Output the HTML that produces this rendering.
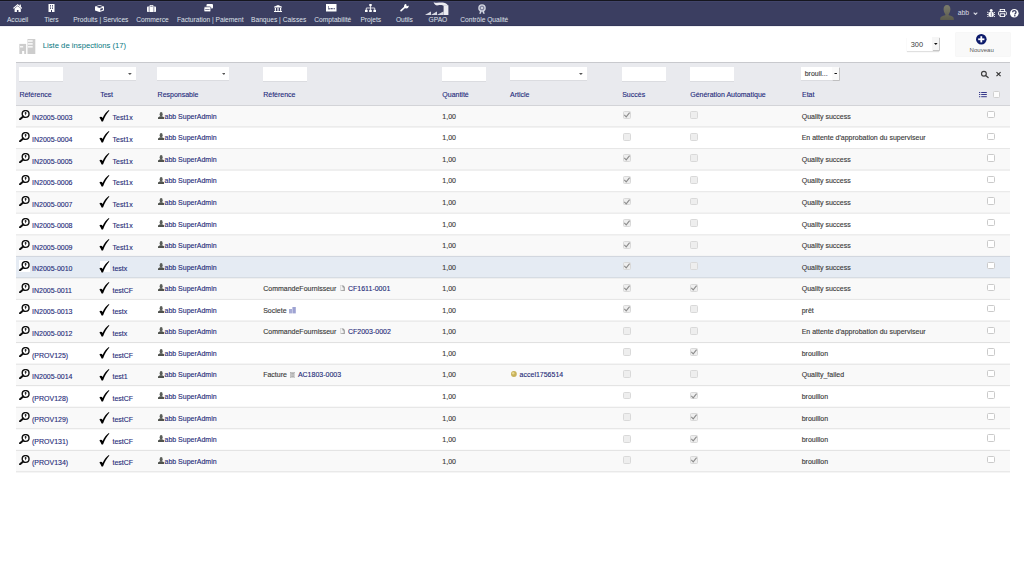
<!DOCTYPE html>
<html><head><meta charset="utf-8"><title>Liste de inspections</title>
<style>
html,body{margin:0;padding:0;width:1024px;height:576px;overflow:hidden;background:#fff;position:relative;font-family:"Liberation Sans",sans-serif}
.b{position:absolute;display:block}
.t{position:absolute;white-space:nowrap;line-height:0;height:0;-webkit-text-stroke:0.12px currentColor}
.c{text-align:center}
</style></head><body>
<div class="b" style="left:0.00px;top:0.00px;width:1024.00px;height:26.00px;background:#3b3e61"></div>
<div class="b" style="left:0.00px;top:0.00px;width:1024.00px;height:1.00px;background:#15161f"></div>
<div class="b" style="left:0.00px;top:1.00px;width:1024.00px;height:1.00px;background:#41446a"></div>
<div class="b" style="left:0.00px;top:25.00px;width:1024.00px;height:1.00px;background:#34375a"></div>
<div class="b" style="left:0.00px;top:26.00px;width:1024.00px;height:1.00px;background:#eeeff3"></div>
<div class="t c" style="left:-82.40px;width:200px;top:20.00px;font-size:6.65px;color:#dfe1e9;-webkit-text-stroke:0">Accueil</div>
<svg class="b" style="left:12.70px;top:4.00px" width="9.4" height="8" viewBox="0 0 9.4 8"><path d="M4.7 0 L9.4 4.1 L8.6 4.8 L4.7 1.5 L0.8 4.8 L0 4.1 Z" fill="#fff"/><rect x="6.6" y="0.6" width="1.3" height="2.4" fill="#fff"/><path d="M1.6 4.6 L4.7 2.1 L7.8 4.6 V8 H5.5 V5.9 H3.9 V8 H1.6 Z" fill="#fff"/></svg>
<div class="t c" style="left:-48.60px;width:200px;top:20.00px;font-size:6.65px;color:#dfe1e9;-webkit-text-stroke:0">Tiers</div>
<svg class="b" style="left:47.80px;top:4.00px" width="7" height="8" viewBox="0 0 7 8"><rect x="0.5" y="0" width="6" height="8" fill="#fff"/><rect x="2" y="1.2" width="1" height="1.3" fill="#3b3e61"/><rect x="4" y="1.2" width="1" height="1.3" fill="#3b3e61"/><rect x="2" y="3.5" width="1" height="1.3" fill="#3b3e61"/><rect x="4" y="3.5" width="1" height="1.3" fill="#3b3e61"/><rect x="3" y="6" width="1" height="2" fill="#3b3e61"/></svg>
<div class="t c" style="left:0.80px;width:200px;top:20.00px;font-size:6.65px;color:#dfe1e9;-webkit-text-stroke:0">Produits | Services</div>
<svg class="b" style="left:95.30px;top:4.80px" width="9" height="7" viewBox="0 0 9 7"><path d="M4.5 0 L9 1.6 V5.4 L4.5 7 L0 5.4 V1.6 Z" fill="#fff"/><path d="M1.2 1.8 L4.5 3 L7.8 1.8 L4.5 0.8Z" fill="#3b3e61"/><path d="M5.3 3.8 L7.8 3 V4.8 L5.3 5.7Z" fill="#3b3e61"/></svg>
<div class="t c" style="left:52.45px;width:200px;top:20.00px;font-size:6.65px;color:#dfe1e9;-webkit-text-stroke:0">Commerce</div>
<svg class="b" style="left:146.80px;top:4.80px" width="9" height="7" viewBox="0 0 9 7"><rect x="0" y="1.6" width="9" height="5.4" rx="0.8" fill="#fff"/><path d="M3 1.8 V0.4 H6 V1.8" stroke="#fff" stroke-width="0.9" fill="none"/><rect x="1.8" y="1.6" width="0.6" height="5.4" fill="#3b3e61"/><rect x="6.6" y="1.6" width="0.6" height="5.4" fill="#3b3e61"/></svg>
<div class="t c" style="left:110.25px;width:200px;top:20.00px;font-size:6.65px;color:#dfe1e9;-webkit-text-stroke:0">Facturation | Paiement</div>
<svg class="b" style="left:204.25px;top:4.00px" width="9" height="8" viewBox="0 0 9 8"><rect x="2.5" y="0" width="6.5" height="4.6" rx="1" fill="#fff"/><rect x="0" y="2.8" width="6.8" height="5" rx="1" fill="#fff" stroke="#3b3e61" stroke-width="0.7"/><rect x="1.2" y="5" width="4.4" height="0.6" fill="#3b3e61"/></svg>
<div class="t c" style="left:178.65px;width:200px;top:20.00px;font-size:6.65px;color:#dfe1e9;-webkit-text-stroke:0">Banques | Caisses</div>
<svg class="b" style="left:273.70px;top:4.50px" width="8" height="7" viewBox="0 0 8 7"><path d="M4 0 L8 1.8 V2.4 H0 V1.8 Z" fill="#fff"/><rect x="0.8" y="2.8" width="1.2" height="3" fill="#fff"/><rect x="3.4" y="2.8" width="1.2" height="3" fill="#fff"/><rect x="6" y="2.8" width="1.2" height="3" fill="#fff"/><rect x="0" y="6" width="8" height="1" fill="#fff"/></svg>
<div class="t c" style="left:232.80px;width:200px;top:20.00px;font-size:6.65px;color:#dfe1e9;-webkit-text-stroke:0">Comptabilité</div>
<svg class="b" style="left:326.20px;top:4.10px" width="10.5" height="7.5" viewBox="0 0 10.5 7.5"><rect x="0" y="0" width="10.5" height="7.5" fill="#fff"/><rect x="2.0" y="2.0" width="0.9" height="3.4" fill="#8a8ca0"/><rect x="2.6" y="4.2" width="1.2" height="1.2" fill="#3b3e61"/><rect x="4.5" y="4.0" width="2.2" height="1.3" fill="#55587a"/><rect x="7.6" y="4.0" width="1.2" height="1.3" fill="#55587a"/></svg>
<div class="t c" style="left:270.75px;width:200px;top:20.00px;font-size:6.65px;color:#dfe1e9;-webkit-text-stroke:0">Projets</div>
<svg class="b" style="left:365.00px;top:3.80px" width="11" height="8.2" viewBox="0 0 11 8.2"><rect x="4.3" y="0" width="2.4" height="2.2" fill="#fff"/><path d="M5.5 2 V4 M1.3 6 V4 H9.7 V6 M5.5 4 V6" stroke="#fff" stroke-width="0.8" fill="none"/><rect x="0" y="5.8" width="2.6" height="2.4" fill="#fff"/><rect x="4.2" y="5.8" width="2.6" height="2.4" fill="#fff"/><rect x="8.4" y="5.8" width="2.6" height="2.4" fill="#fff"/></svg>
<div class="t c" style="left:304.40px;width:200px;top:20.00px;font-size:6.65px;color:#dfe1e9;-webkit-text-stroke:0">Outils</div>
<svg class="b" style="left:399.90px;top:4.30px" width="9" height="7.5" viewBox="0 0 9 7.5"><path d="M1.1 6.6 L5.0 3.0" stroke="#fff" stroke-width="1.7" stroke-linecap="round"/><circle cx="6.3" cy="2.2" r="2.3" fill="#fff"/><path d="M6.0 0.3 L6.8 2.3 L8.9 1.6 L8.9 -0.5 Z" fill="#3b3e61"/></svg>
<div class="t c" style="left:337.95px;width:200px;top:20.00px;font-size:6.65px;color:#dfe1e9;-webkit-text-stroke:0">GPAO</div>
<svg class="b" style="left:424.75px;top:1.60px" width="24.5" height="13" viewBox="0 0 24.5 13"><path d="M8.6 0.2 C12 1.4 15.5 -0.1 19 0.7 C21.3 1.3 22.6 2.5 23.4 3.8 L18.6 3.8 C17.6 3.0 15.2 2.9 13.2 3.3 C11.0 3.7 9.2 2.6 8.6 0.2 Z" fill="#ececf2"/><rect x="18.6" y="3.4" width="4.8" height="9.6" fill="#ececf2"/><path d="M0 13 C2 12 4 10.4 6 9.6 V13 Z M6 13 C8 12 10 10.4 12 9.6 V13 Z M12 13 C14 12 16.4 10.4 18.6 9.6 V13 Z" fill="#d6d8e2"/></svg>
<div class="t c" style="left:384.25px;width:200px;top:20.00px;font-size:6.65px;color:#dfe1e9;-webkit-text-stroke:0">Contrôle Qualité</div>
<svg class="b" style="left:477.70px;top:3.60px" width="8" height="10.5" viewBox="0 0 8 10.5"><path d="M2.0 6.2 L1.4 10.2 L3.0 9.4 L3.6 7.2Z M6.0 6.2 L6.6 10.2 L5.0 9.4 L4.4 7.2Z" fill="#d4d7e2"/><circle cx="4" cy="4.0" r="3.8" fill="#cfd2de"/><circle cx="4" cy="4.0" r="1.9" fill="none" stroke="#50547a" stroke-width="0.8"/></svg>
<svg class="b" style="left:940.00px;top:4.80px" width="14" height="15.4" viewBox="0 0 14 15.4"><defs><linearGradient id="av" x1="0" y1="0" x2="0" y2="1"><stop offset="0" stop-color="#7c7c6c"/><stop offset="1" stop-color="#5a5a4c"/></linearGradient></defs><path d="M7 0 C9.4 0 10.6 2 10.4 4.6 C10.2 7 9.2 8.6 8.6 9.4 L8.8 10.2 C11.6 10.8 13.8 11.6 13.8 13.6 V15.4 H0.2 V13.6 C0.2 11.6 2.4 10.8 5.2 10.2 L5.4 9.4 C4.8 8.6 3.8 7 3.6 4.6 C3.4 2 4.6 0 7 0 Z" fill="url(#av)"/></svg>
<div class="t" style="left:957.70px;top:13.24px;font-size:6.8px;color:#d9dbe3;-webkit-text-stroke:0">abb</div>
<svg class="b" style="left:972.60px;top:11.60px" width="5" height="3.4" viewBox="0 0 5 3.4"><path d="M0.7 0.7 L2.5 2.5 L4.3 0.7" stroke="#d9dbe3" stroke-width="1.1" fill="none"/></svg>
<svg class="b" style="left:986.50px;top:9.20px" width="8.4" height="8" viewBox="0 0 8.4 8"><circle cx="4.2" cy="1.6" r="1.5" fill="#fff"/><rect x="1.8" y="3" width="4.8" height="5" rx="1.5" fill="#fff"/><path d="M0 3 L1.8 4 M8.4 3 L6.6 4 M0 5.5 H1.8 M8.4 5.5 H6.6 M0 8 L1.8 7 M8.4 8 L6.6 7" stroke="#fff" stroke-width="0.8"/><rect x="3.9" y="3.4" width="0.6" height="4.2" fill="#3b3e61"/></svg>
<svg class="b" style="left:998.20px;top:9.20px" width="8.8" height="8" viewBox="0 0 8.8 8"><rect x="2.2" y="0.4" width="4.4" height="2.2" fill="none" stroke="#fff" stroke-width="0.9"/><rect x="0.45" y="2.6" width="7.9" height="3.6" rx="0.9" fill="none" stroke="#fff" stroke-width="0.9"/><rect x="2.2" y="4.8" width="4.4" height="2.8" fill="#3b3e61" stroke="#fff" stroke-width="0.9"/></svg>
<svg class="b" style="left:1010.00px;top:9.20px" width="8.6" height="8.6" viewBox="0 0 8.6 8.6"><circle cx="4.3" cy="4.3" r="4.3" fill="#fff"/><path d="M2.6 3.3 C2.6 1.2 6.0 1.2 6.0 3.2 C6.0 4.4 4.8 4.4 4.8 5.4" stroke="#3b3e61" stroke-width="1.3" fill="none"/><rect x="4.1" y="6.1" width="1.4" height="1.3" fill="#3b3e61"/></svg>
<svg class="b" style="left:18.60px;top:38.90px" width="17" height="15.3" viewBox="0 0 17 15.3"><rect x="0.35" y="4.9" width="6.75" height="10.25" fill="#cdcdcd"/><rect x="1.0" y="7.2" width="3.2" height="1.2" fill="#fff"/><rect x="3.1" y="12" width="2.1" height="3.3" fill="#fff"/><rect x="8.5" y="0" width="7.8" height="15.15" fill="#cdcdcd"/><rect x="8.9" y="1.3" width="4.8" height="1.4" fill="#fff"/><rect x="8.9" y="4.2" width="4.8" height="1.4" fill="#fff"/><rect x="8.9" y="7.2" width="4.8" height="1.3" fill="#fff"/></svg>
<div class="t" style="left:42.75px;top:45.73px;font-size:7.7px;color:#067880;-webkit-text-stroke:0">Liste de inspections (17)</div>
<div class="b" style="left:907.30px;top:36.90px;width:32.10px;height:13.80px;background:#fff;box-shadow:0 1px 1px rgba(0,0,0,0.12)"></div>
<div class="t" style="left:910.70px;top:44.84px;font-size:7.4px;color:#3a3a3a;-webkit-text-stroke:0">300</div>
<div class="b" style="left:932.20px;top:37.00px;width:7.00px;height:13.40px;background:#f6f6f6;box-shadow:0.8px 0.8px 0 #b8b8b8"></div>
<svg class="b" style="left:934.00px;top:42.80px" width="3.6" height="1.9" viewBox="0 0 3.6 1.9"><path d="M0 0 H3.6 L1.8 1.9Z" fill="#111"/></svg>
<div class="b" style="left:955.70px;top:32.70px;width:54.00px;height:23.00px;background:#f9f9f9;box-shadow:0 0 0 0.5px #f0f0f0"></div>
<svg class="b" style="left:976.40px;top:34.20px" width="10.6" height="10.6" viewBox="0 0 10.6 10.6"><circle cx="5.3" cy="5.3" r="5.3" fill="#0c1a6b"/><rect x="4.4" y="2.2" width="1.8" height="6.2" fill="#fff"/><rect x="2.2" y="4.4" width="6.2" height="1.8" fill="#fff"/></svg>
<div class="t c" style="left:881.70px;width:200px;top:49.80px;font-size:6.05px;color:#5a5a5a;-webkit-text-stroke:0">Nouveau</div>
<div class="b" style="left:16.00px;top:62.00px;width:993.60px;height:43.00px;background:#e9eaee"></div>
<div class="b" style="left:16.00px;top:62.00px;width:993.60px;height:1.00px;background:#c8c9cd"></div>
<div class="b" style="left:16.00px;top:105.00px;width:993.60px;height:1.00px;background:#d3d4d8"></div>
<div class="b" style="left:18.90px;top:66.60px;width:43.80px;height:14.40px;background:#fff;box-shadow:0 1px 0.5px rgba(0,0,0,0.06)"></div>
<div class="b" style="left:99.80px;top:66.90px;width:36.00px;height:13.20px;background:#fff;box-shadow:0 1px 0.5px rgba(0,0,0,0.06)"></div>
<svg class="b" style="left:127.90px;top:73.00px" width="3.8" height="2" viewBox="0 0 3.8 2"><path d="M0 0 H3.8 L1.9 2Z" fill="#555"/></svg>
<div class="b" style="left:157.20px;top:66.90px;width:71.90px;height:13.20px;background:#fff;box-shadow:0 1px 0.5px rgba(0,0,0,0.06)"></div>
<svg class="b" style="left:221.60px;top:73.00px" width="3.8" height="2" viewBox="0 0 3.8 2"><path d="M0 0 H3.8 L1.9 2Z" fill="#555"/></svg>
<div class="b" style="left:263.00px;top:66.60px;width:43.80px;height:14.40px;background:#fff;box-shadow:0 1px 0.5px rgba(0,0,0,0.06)"></div>
<div class="b" style="left:441.90px;top:66.60px;width:43.90px;height:14.40px;background:#fff;box-shadow:0 1px 0.5px rgba(0,0,0,0.06)"></div>
<div class="b" style="left:510.00px;top:66.90px;width:76.90px;height:13.20px;background:#fff;box-shadow:0 1px 0.5px rgba(0,0,0,0.06)"></div>
<svg class="b" style="left:579.30px;top:73.00px" width="3.8" height="2" viewBox="0 0 3.8 2"><path d="M0 0 H3.8 L1.9 2Z" fill="#555"/></svg>
<div class="b" style="left:621.80px;top:66.60px;width:43.80px;height:14.40px;background:#fff;box-shadow:0 1px 0.5px rgba(0,0,0,0.06)"></div>
<div class="b" style="left:689.80px;top:66.60px;width:43.90px;height:14.40px;background:#fff;box-shadow:0 1px 0.5px rgba(0,0,0,0.06)"></div>
<div class="b" style="left:801.00px;top:66.90px;width:38.00px;height:13.40px;background:#fff;box-shadow:0 1px 0.5px rgba(0,0,0,0.06)"></div>
<div class="t" style="left:804.70px;top:73.87px;font-size:7.0px;color:#3c3c3c;">brouil...</div>
<div class="b" style="left:832.00px;top:66.90px;width:7.00px;height:13.40px;background:#fafafa;box-shadow:0.8px 0.8px 0 #b8b8b8"></div>
<svg class="b" style="left:833.80px;top:72.60px" width="3.6" height="1.9" viewBox="0 0 3.6 1.9"><path d="M0 0 H3.6 L1.8 1.9Z" fill="#111"/></svg>
<svg class="b" style="left:979.50px;top:69.50px" width="9" height="9" viewBox="0 0 9 9"><circle cx="3.9" cy="3.7" r="2.4" stroke="#3e3e3e" stroke-width="1.15" fill="none"/><path d="M5.6 5.5 L8.1 7.6" stroke="#3e3e3e" stroke-width="1.3" stroke-linecap="round"/></svg>
<svg class="b" style="left:995.00px;top:71.00px" width="8" height="7" viewBox="0 0 8 7"><path d="M1.5 1.2 L5.6 5.2 M5.6 1.2 L1.5 5.2" stroke="#333" stroke-width="1.15" stroke-linecap="butt"/></svg>
<div class="t" style="left:19.40px;top:95.17px;font-size:7.0px;color:#1e2a7c;">Référence</div>
<div class="t" style="left:100.20px;top:95.17px;font-size:7.0px;color:#1e2a7c;">Test</div>
<div class="t" style="left:157.60px;top:95.17px;font-size:7.0px;color:#1e2a7c;">Responsable</div>
<div class="t" style="left:263.20px;top:95.17px;font-size:7.0px;color:#1e2a7c;">Référence</div>
<div class="t" style="left:442.30px;top:95.17px;font-size:7.0px;color:#1e2a7c;">Quantité</div>
<div class="t" style="left:510.00px;top:95.17px;font-size:7.0px;color:#1e2a7c;">Article</div>
<div class="t" style="left:622.20px;top:95.17px;font-size:7.0px;color:#1e2a7c;">Succès</div>
<div class="t" style="left:690.20px;top:95.17px;font-size:7.0px;color:#1e2a7c;">Génération Automatique</div>
<div class="t" style="left:802.00px;top:95.17px;font-size:7.0px;color:#1e2a7c;">Etat</div>
<svg class="b" style="left:979.00px;top:92.00px" width="8" height="6" viewBox="0 0 8 6"><g fill="#35378a"><rect x="0" y="0" width="1.3" height="1"/><rect x="2.2" y="0" width="5.6" height="1"/><rect x="0" y="2" width="1.3" height="1"/><rect x="2.2" y="2" width="5.6" height="1"/><rect x="0" y="4.2" width="1.3" height="1"/><rect x="2.2" y="4.2" width="5.6" height="1"/></g></svg>
<div class="b" style="left:993.10px;top:91.30px;width:7.20px;height:7.20px;background:#fcfcfc;border:1px solid #d0d0d0;box-sizing:border-box;border-radius:1.5px"></div>
<div class="b" style="left:16.00px;top:106.00px;width:993.60px;height:21.00px;background:#f9f9f9"></div>
<div class="b" style="left:16.00px;top:127.00px;width:993.60px;height:22.00px;background:#ffffff"></div>
<div class="b" style="left:16.00px;top:149.00px;width:993.60px;height:21.00px;background:#f9f9f9"></div>
<div class="b" style="left:16.00px;top:170.00px;width:993.60px;height:22.00px;background:#ffffff"></div>
<div class="b" style="left:16.00px;top:192.00px;width:993.60px;height:21.00px;background:#f9f9f9"></div>
<div class="b" style="left:16.00px;top:213.00px;width:993.60px;height:22.00px;background:#ffffff"></div>
<div class="b" style="left:16.00px;top:235.00px;width:993.60px;height:21.00px;background:#f9f9f9"></div>
<div class="b" style="left:16.00px;top:256.00px;width:993.60px;height:22.00px;background:#e5ebf3"></div>
<div class="b" style="left:16.00px;top:278.00px;width:993.60px;height:21.00px;background:#f9f9f9"></div>
<div class="b" style="left:16.00px;top:299.00px;width:993.60px;height:22.00px;background:#ffffff"></div>
<div class="b" style="left:16.00px;top:321.00px;width:993.60px;height:22.00px;background:#f9f9f9"></div>
<div class="b" style="left:16.00px;top:343.00px;width:993.60px;height:21.00px;background:#ffffff"></div>
<div class="b" style="left:16.00px;top:364.00px;width:993.60px;height:22.00px;background:#f9f9f9"></div>
<div class="b" style="left:16.00px;top:386.00px;width:993.60px;height:21.00px;background:#ffffff"></div>
<div class="b" style="left:16.00px;top:407.00px;width:993.60px;height:22.00px;background:#f9f9f9"></div>
<div class="b" style="left:16.00px;top:429.00px;width:993.60px;height:21.00px;background:#ffffff"></div>
<div class="b" style="left:16.00px;top:450.00px;width:993.60px;height:22.00px;background:#f9f9f9"></div>
<div class="b" style="left:16.00px;top:126.00px;width:993.60px;height:1.00px;background:rgba(0,0,0,0.050)"></div>
<div class="b" style="left:16.00px;top:127.00px;width:993.60px;height:1.00px;background:rgba(0,0,0,0.050)"></div>
<div class="b" style="left:16.00px;top:148.00px;width:993.60px;height:1.00px;background:rgba(0,0,0,0.095)"></div>
<div class="b" style="left:16.00px;top:149.00px;width:993.60px;height:1.00px;background:rgba(0,0,0,0.005)"></div>
<div class="b" style="left:16.00px;top:169.00px;width:993.60px;height:1.00px;background:rgba(0,0,0,0.039)"></div>
<div class="b" style="left:16.00px;top:170.00px;width:993.60px;height:1.00px;background:rgba(0,0,0,0.061)"></div>
<div class="b" style="left:16.00px;top:191.00px;width:993.60px;height:1.00px;background:rgba(0,0,0,0.084)"></div>
<div class="b" style="left:16.00px;top:192.00px;width:993.60px;height:1.00px;background:rgba(0,0,0,0.016)"></div>
<div class="b" style="left:16.00px;top:212.00px;width:993.60px;height:1.00px;background:rgba(0,0,0,0.028)"></div>
<div class="b" style="left:16.00px;top:213.00px;width:993.60px;height:1.00px;background:rgba(0,0,0,0.072)"></div>
<div class="b" style="left:16.00px;top:234.00px;width:993.60px;height:1.00px;background:rgba(0,0,0,0.072)"></div>
<div class="b" style="left:16.00px;top:235.00px;width:993.60px;height:1.00px;background:rgba(0,0,0,0.028)"></div>
<div class="b" style="left:16.00px;top:255.00px;width:993.60px;height:1.00px;background:rgba(0,0,0,0.017)"></div>
<div class="b" style="left:16.00px;top:256.00px;width:993.60px;height:1.00px;background:rgba(0,0,0,0.083)"></div>
<div class="b" style="left:16.00px;top:277.00px;width:993.60px;height:1.00px;background:rgba(0,0,0,0.061)"></div>
<div class="b" style="left:16.00px;top:278.00px;width:993.60px;height:1.00px;background:rgba(0,0,0,0.039)"></div>
<div class="b" style="left:16.00px;top:298.00px;width:993.60px;height:1.00px;background:rgba(0,0,0,0.006)"></div>
<div class="b" style="left:16.00px;top:299.00px;width:993.60px;height:1.00px;background:rgba(0,0,0,0.094)"></div>
<div class="b" style="left:16.00px;top:320.00px;width:993.60px;height:1.00px;background:rgba(0,0,0,0.050)"></div>
<div class="b" style="left:16.00px;top:321.00px;width:993.60px;height:1.00px;background:rgba(0,0,0,0.050)"></div>
<div class="b" style="left:16.00px;top:342.00px;width:993.60px;height:1.00px;background:rgba(0,0,0,0.094)"></div>
<div class="b" style="left:16.00px;top:343.00px;width:993.60px;height:1.00px;background:rgba(0,0,0,0.006)"></div>
<div class="b" style="left:16.00px;top:363.00px;width:993.60px;height:1.00px;background:rgba(0,0,0,0.039)"></div>
<div class="b" style="left:16.00px;top:364.00px;width:993.60px;height:1.00px;background:rgba(0,0,0,0.061)"></div>
<div class="b" style="left:16.00px;top:385.00px;width:993.60px;height:1.00px;background:rgba(0,0,0,0.083)"></div>
<div class="b" style="left:16.00px;top:386.00px;width:993.60px;height:1.00px;background:rgba(0,0,0,0.017)"></div>
<div class="b" style="left:16.00px;top:406.00px;width:993.60px;height:1.00px;background:rgba(0,0,0,0.028)"></div>
<div class="b" style="left:16.00px;top:407.00px;width:993.60px;height:1.00px;background:rgba(0,0,0,0.072)"></div>
<div class="b" style="left:16.00px;top:428.00px;width:993.60px;height:1.00px;background:rgba(0,0,0,0.072)"></div>
<div class="b" style="left:16.00px;top:429.00px;width:993.60px;height:1.00px;background:rgba(0,0,0,0.028)"></div>
<div class="b" style="left:16.00px;top:449.00px;width:993.60px;height:1.00px;background:rgba(0,0,0,0.016)"></div>
<div class="b" style="left:16.00px;top:450.00px;width:993.60px;height:1.00px;background:rgba(0,0,0,0.084)"></div>
<div class="b" style="left:16.00px;top:471.00px;width:993.60px;height:1.00px;background:rgba(0,0,0,0.061)"></div>
<div class="b" style="left:16.00px;top:472.00px;width:993.60px;height:1.00px;background:rgba(0,0,0,0.039)"></div>
<svg class="b" style="left:18.90px;top:110.20px" width="11" height="10" viewBox="0 0 11 10"><circle cx="6.6" cy="4" r="3.4" stroke="#111" stroke-width="1.4" fill="#fff"/><path d="M4.2 6.4 L1 9.2" stroke="#111" stroke-width="2" stroke-linecap="round"/><circle cx="6.6" cy="2.9" r="0.9" fill="#111"/><path d="M5.9 3.4 H7.3 L6.6 5.6Z" fill="#111"/></svg>
<div class="t" style="left:32.00px;top:118.47px;font-size:7.0px;color:#1f2b78;">IN2005-0003</div>
<svg class="b" style="left:99.30px;top:109.90px" width="11" height="12" viewBox="0 0 11 12"><path d="M0.4 7.4 C1.4 6.3 2.9 6.5 3.6 8.0 C5.2 4.6 7.4 1.6 9.9 0.0 L10.4 0.6 C8.0 3.2 5.6 7.2 4.0 11.6 L2.6 11.6 C2.1 9.9 1.4 8.5 0.4 7.4 Z" fill="#000"/></svg>
<div class="t" style="left:112.50px;top:118.47px;font-size:7.0px;color:#1f2b78;">Test1x</div>
<svg class="b" style="left:157.90px;top:111.90px" width="6.3" height="7" viewBox="0 0 6.3 7"><ellipse cx="3.15" cy="2.2" rx="1.5" ry="2.2" fill="#5a5d58"/><path d="M0 7 V5.9 C0 5.0 1.2 4.8 2.3 4.3 H4 C5.1 4.8 6.3 5.0 6.3 5.9 V7Z" fill="#4f524d"/></svg>
<div class="t" style="left:164.50px;top:116.77px;font-size:7.0px;color:#1f2b78;">abb SuperAdmin</div>
<div class="t" style="left:442.30px;top:116.77px;font-size:7.0px;color:#383838;">1,00</div>
<div class="b" style="left:622.70px;top:111.30px;width:7.90px;height:7.90px;background:#eeeeee;border:1px solid #d9d9d9;box-sizing:border-box;border-radius:1.5px"></div>
<svg class="b" style="left:622.70px;top:111.30px" width="8" height="8" viewBox="0 0 8 8"><path d="M1.3 3.9 L3.2 5.9 L6.6 1.6" stroke="#8c8c8c" stroke-width="1.1" fill="none"/></svg>
<div class="b" style="left:689.80px;top:111.30px;width:7.90px;height:7.90px;background:#eeeeee;border:1px solid #d9d9d9;box-sizing:border-box;border-radius:1.5px"></div>
<div class="t" style="left:801.70px;top:116.77px;font-size:7.0px;color:#383838;">Quality success</div>
<div class="b" style="left:987.20px;top:111.10px;width:7.50px;height:7.40px;background:#fff;border:1px solid #cacaca;box-sizing:border-box;border-radius:1.5px"></div>
<svg class="b" style="left:18.90px;top:131.76px" width="11" height="10" viewBox="0 0 11 10"><circle cx="6.6" cy="4" r="3.4" stroke="#111" stroke-width="1.4" fill="#fff"/><path d="M4.2 6.4 L1 9.2" stroke="#111" stroke-width="2" stroke-linecap="round"/><circle cx="6.6" cy="2.9" r="0.9" fill="#111"/><path d="M5.9 3.4 H7.3 L6.6 5.6Z" fill="#111"/></svg>
<div class="t" style="left:32.00px;top:140.03px;font-size:7.0px;color:#1f2b78;">IN2005-0004</div>
<svg class="b" style="left:99.30px;top:131.46px" width="11" height="12" viewBox="0 0 11 12"><path d="M0.4 7.4 C1.4 6.3 2.9 6.5 3.6 8.0 C5.2 4.6 7.4 1.6 9.9 0.0 L10.4 0.6 C8.0 3.2 5.6 7.2 4.0 11.6 L2.6 11.6 C2.1 9.9 1.4 8.5 0.4 7.4 Z" fill="#000"/></svg>
<div class="t" style="left:112.50px;top:140.03px;font-size:7.0px;color:#1f2b78;">Test1x</div>
<svg class="b" style="left:157.90px;top:133.46px" width="6.3" height="7" viewBox="0 0 6.3 7"><ellipse cx="3.15" cy="2.2" rx="1.5" ry="2.2" fill="#5a5d58"/><path d="M0 7 V5.9 C0 5.0 1.2 4.8 2.3 4.3 H4 C5.1 4.8 6.3 5.0 6.3 5.9 V7Z" fill="#4f524d"/></svg>
<div class="t" style="left:164.50px;top:138.33px;font-size:7.0px;color:#1f2b78;">abb SuperAdmin</div>
<div class="t" style="left:442.30px;top:138.33px;font-size:7.0px;color:#383838;">1,00</div>
<div class="b" style="left:622.70px;top:132.86px;width:7.90px;height:7.90px;background:#eeeeee;border:1px solid #d9d9d9;box-sizing:border-box;border-radius:1.5px"></div>
<div class="b" style="left:689.80px;top:132.86px;width:7.90px;height:7.90px;background:#eeeeee;border:1px solid #d9d9d9;box-sizing:border-box;border-radius:1.5px"></div>
<div class="t" style="left:801.70px;top:138.33px;font-size:7.0px;color:#383838;">En attente d'approbation du superviseur</div>
<div class="b" style="left:987.20px;top:132.66px;width:7.50px;height:7.40px;background:#fff;border:1px solid #cacaca;box-sizing:border-box;border-radius:1.5px"></div>
<svg class="b" style="left:18.90px;top:153.31px" width="11" height="10" viewBox="0 0 11 10"><circle cx="6.6" cy="4" r="3.4" stroke="#111" stroke-width="1.4" fill="#fff"/><path d="M4.2 6.4 L1 9.2" stroke="#111" stroke-width="2" stroke-linecap="round"/><circle cx="6.6" cy="2.9" r="0.9" fill="#111"/><path d="M5.9 3.4 H7.3 L6.6 5.6Z" fill="#111"/></svg>
<div class="t" style="left:32.00px;top:161.59px;font-size:7.0px;color:#1f2b78;">IN2005-0005</div>
<svg class="b" style="left:99.30px;top:153.01px" width="11" height="12" viewBox="0 0 11 12"><path d="M0.4 7.4 C1.4 6.3 2.9 6.5 3.6 8.0 C5.2 4.6 7.4 1.6 9.9 0.0 L10.4 0.6 C8.0 3.2 5.6 7.2 4.0 11.6 L2.6 11.6 C2.1 9.9 1.4 8.5 0.4 7.4 Z" fill="#000"/></svg>
<div class="t" style="left:112.50px;top:161.59px;font-size:7.0px;color:#1f2b78;">Test1x</div>
<svg class="b" style="left:157.90px;top:155.01px" width="6.3" height="7" viewBox="0 0 6.3 7"><ellipse cx="3.15" cy="2.2" rx="1.5" ry="2.2" fill="#5a5d58"/><path d="M0 7 V5.9 C0 5.0 1.2 4.8 2.3 4.3 H4 C5.1 4.8 6.3 5.0 6.3 5.9 V7Z" fill="#4f524d"/></svg>
<div class="t" style="left:164.50px;top:159.89px;font-size:7.0px;color:#1f2b78;">abb SuperAdmin</div>
<div class="t" style="left:442.30px;top:159.89px;font-size:7.0px;color:#383838;">1,00</div>
<div class="b" style="left:622.70px;top:154.41px;width:7.90px;height:7.90px;background:#eeeeee;border:1px solid #d9d9d9;box-sizing:border-box;border-radius:1.5px"></div>
<svg class="b" style="left:622.70px;top:154.41px" width="8" height="8" viewBox="0 0 8 8"><path d="M1.3 3.9 L3.2 5.9 L6.6 1.6" stroke="#8c8c8c" stroke-width="1.1" fill="none"/></svg>
<div class="b" style="left:689.80px;top:154.41px;width:7.90px;height:7.90px;background:#eeeeee;border:1px solid #d9d9d9;box-sizing:border-box;border-radius:1.5px"></div>
<div class="t" style="left:801.70px;top:159.89px;font-size:7.0px;color:#383838;">Quality success</div>
<div class="b" style="left:987.20px;top:154.21px;width:7.50px;height:7.40px;background:#fff;border:1px solid #cacaca;box-sizing:border-box;border-radius:1.5px"></div>
<svg class="b" style="left:18.90px;top:174.87px" width="11" height="10" viewBox="0 0 11 10"><circle cx="6.6" cy="4" r="3.4" stroke="#111" stroke-width="1.4" fill="#fff"/><path d="M4.2 6.4 L1 9.2" stroke="#111" stroke-width="2" stroke-linecap="round"/><circle cx="6.6" cy="2.9" r="0.9" fill="#111"/><path d="M5.9 3.4 H7.3 L6.6 5.6Z" fill="#111"/></svg>
<div class="t" style="left:32.00px;top:183.14px;font-size:7.0px;color:#1f2b78;">IN2005-0006</div>
<svg class="b" style="left:99.30px;top:174.57px" width="11" height="12" viewBox="0 0 11 12"><path d="M0.4 7.4 C1.4 6.3 2.9 6.5 3.6 8.0 C5.2 4.6 7.4 1.6 9.9 0.0 L10.4 0.6 C8.0 3.2 5.6 7.2 4.0 11.6 L2.6 11.6 C2.1 9.9 1.4 8.5 0.4 7.4 Z" fill="#000"/></svg>
<div class="t" style="left:112.50px;top:183.14px;font-size:7.0px;color:#1f2b78;">Test1x</div>
<svg class="b" style="left:157.90px;top:176.57px" width="6.3" height="7" viewBox="0 0 6.3 7"><ellipse cx="3.15" cy="2.2" rx="1.5" ry="2.2" fill="#5a5d58"/><path d="M0 7 V5.9 C0 5.0 1.2 4.8 2.3 4.3 H4 C5.1 4.8 6.3 5.0 6.3 5.9 V7Z" fill="#4f524d"/></svg>
<div class="t" style="left:164.50px;top:181.44px;font-size:7.0px;color:#1f2b78;">abb SuperAdmin</div>
<div class="t" style="left:442.30px;top:181.44px;font-size:7.0px;color:#383838;">1,00</div>
<div class="b" style="left:622.70px;top:175.97px;width:7.90px;height:7.90px;background:#eeeeee;border:1px solid #d9d9d9;box-sizing:border-box;border-radius:1.5px"></div>
<svg class="b" style="left:622.70px;top:175.97px" width="8" height="8" viewBox="0 0 8 8"><path d="M1.3 3.9 L3.2 5.9 L6.6 1.6" stroke="#8c8c8c" stroke-width="1.1" fill="none"/></svg>
<div class="b" style="left:689.80px;top:175.97px;width:7.90px;height:7.90px;background:#eeeeee;border:1px solid #d9d9d9;box-sizing:border-box;border-radius:1.5px"></div>
<div class="t" style="left:801.70px;top:181.44px;font-size:7.0px;color:#383838;">Quality success</div>
<div class="b" style="left:987.20px;top:175.77px;width:7.50px;height:7.40px;background:#fff;border:1px solid #cacaca;box-sizing:border-box;border-radius:1.5px"></div>
<svg class="b" style="left:18.90px;top:196.42px" width="11" height="10" viewBox="0 0 11 10"><circle cx="6.6" cy="4" r="3.4" stroke="#111" stroke-width="1.4" fill="#fff"/><path d="M4.2 6.4 L1 9.2" stroke="#111" stroke-width="2" stroke-linecap="round"/><circle cx="6.6" cy="2.9" r="0.9" fill="#111"/><path d="M5.9 3.4 H7.3 L6.6 5.6Z" fill="#111"/></svg>
<div class="t" style="left:32.00px;top:204.70px;font-size:7.0px;color:#1f2b78;">IN2005-0007</div>
<svg class="b" style="left:99.30px;top:196.12px" width="11" height="12" viewBox="0 0 11 12"><path d="M0.4 7.4 C1.4 6.3 2.9 6.5 3.6 8.0 C5.2 4.6 7.4 1.6 9.9 0.0 L10.4 0.6 C8.0 3.2 5.6 7.2 4.0 11.6 L2.6 11.6 C2.1 9.9 1.4 8.5 0.4 7.4 Z" fill="#000"/></svg>
<div class="t" style="left:112.50px;top:204.70px;font-size:7.0px;color:#1f2b78;">Test1x</div>
<svg class="b" style="left:157.90px;top:198.12px" width="6.3" height="7" viewBox="0 0 6.3 7"><ellipse cx="3.15" cy="2.2" rx="1.5" ry="2.2" fill="#5a5d58"/><path d="M0 7 V5.9 C0 5.0 1.2 4.8 2.3 4.3 H4 C5.1 4.8 6.3 5.0 6.3 5.9 V7Z" fill="#4f524d"/></svg>
<div class="t" style="left:164.50px;top:203.00px;font-size:7.0px;color:#1f2b78;">abb SuperAdmin</div>
<div class="t" style="left:442.30px;top:203.00px;font-size:7.0px;color:#383838;">1,00</div>
<div class="b" style="left:622.70px;top:197.52px;width:7.90px;height:7.90px;background:#eeeeee;border:1px solid #d9d9d9;box-sizing:border-box;border-radius:1.5px"></div>
<svg class="b" style="left:622.70px;top:197.52px" width="8" height="8" viewBox="0 0 8 8"><path d="M1.3 3.9 L3.2 5.9 L6.6 1.6" stroke="#8c8c8c" stroke-width="1.1" fill="none"/></svg>
<div class="b" style="left:689.80px;top:197.52px;width:7.90px;height:7.90px;background:#eeeeee;border:1px solid #d9d9d9;box-sizing:border-box;border-radius:1.5px"></div>
<div class="t" style="left:801.70px;top:203.00px;font-size:7.0px;color:#383838;">Quality success</div>
<div class="b" style="left:987.20px;top:197.32px;width:7.50px;height:7.40px;background:#fff;border:1px solid #cacaca;box-sizing:border-box;border-radius:1.5px"></div>
<svg class="b" style="left:18.90px;top:217.98px" width="11" height="10" viewBox="0 0 11 10"><circle cx="6.6" cy="4" r="3.4" stroke="#111" stroke-width="1.4" fill="#fff"/><path d="M4.2 6.4 L1 9.2" stroke="#111" stroke-width="2" stroke-linecap="round"/><circle cx="6.6" cy="2.9" r="0.9" fill="#111"/><path d="M5.9 3.4 H7.3 L6.6 5.6Z" fill="#111"/></svg>
<div class="t" style="left:32.00px;top:226.25px;font-size:7.0px;color:#1f2b78;">IN2005-0008</div>
<svg class="b" style="left:99.30px;top:217.68px" width="11" height="12" viewBox="0 0 11 12"><path d="M0.4 7.4 C1.4 6.3 2.9 6.5 3.6 8.0 C5.2 4.6 7.4 1.6 9.9 0.0 L10.4 0.6 C8.0 3.2 5.6 7.2 4.0 11.6 L2.6 11.6 C2.1 9.9 1.4 8.5 0.4 7.4 Z" fill="#000"/></svg>
<div class="t" style="left:112.50px;top:226.25px;font-size:7.0px;color:#1f2b78;">Test1x</div>
<svg class="b" style="left:157.90px;top:219.68px" width="6.3" height="7" viewBox="0 0 6.3 7"><ellipse cx="3.15" cy="2.2" rx="1.5" ry="2.2" fill="#5a5d58"/><path d="M0 7 V5.9 C0 5.0 1.2 4.8 2.3 4.3 H4 C5.1 4.8 6.3 5.0 6.3 5.9 V7Z" fill="#4f524d"/></svg>
<div class="t" style="left:164.50px;top:224.55px;font-size:7.0px;color:#1f2b78;">abb SuperAdmin</div>
<div class="t" style="left:442.30px;top:224.55px;font-size:7.0px;color:#383838;">1,00</div>
<div class="b" style="left:622.70px;top:219.08px;width:7.90px;height:7.90px;background:#eeeeee;border:1px solid #d9d9d9;box-sizing:border-box;border-radius:1.5px"></div>
<svg class="b" style="left:622.70px;top:219.08px" width="8" height="8" viewBox="0 0 8 8"><path d="M1.3 3.9 L3.2 5.9 L6.6 1.6" stroke="#8c8c8c" stroke-width="1.1" fill="none"/></svg>
<div class="b" style="left:689.80px;top:219.08px;width:7.90px;height:7.90px;background:#eeeeee;border:1px solid #d9d9d9;box-sizing:border-box;border-radius:1.5px"></div>
<div class="t" style="left:801.70px;top:224.55px;font-size:7.0px;color:#383838;">Quality success</div>
<div class="b" style="left:987.20px;top:218.88px;width:7.50px;height:7.40px;background:#fff;border:1px solid #cacaca;box-sizing:border-box;border-radius:1.5px"></div>
<svg class="b" style="left:18.90px;top:239.54px" width="11" height="10" viewBox="0 0 11 10"><circle cx="6.6" cy="4" r="3.4" stroke="#111" stroke-width="1.4" fill="#fff"/><path d="M4.2 6.4 L1 9.2" stroke="#111" stroke-width="2" stroke-linecap="round"/><circle cx="6.6" cy="2.9" r="0.9" fill="#111"/><path d="M5.9 3.4 H7.3 L6.6 5.6Z" fill="#111"/></svg>
<div class="t" style="left:32.00px;top:247.81px;font-size:7.0px;color:#1f2b78;">IN2005-0009</div>
<svg class="b" style="left:99.30px;top:239.24px" width="11" height="12" viewBox="0 0 11 12"><path d="M0.4 7.4 C1.4 6.3 2.9 6.5 3.6 8.0 C5.2 4.6 7.4 1.6 9.9 0.0 L10.4 0.6 C8.0 3.2 5.6 7.2 4.0 11.6 L2.6 11.6 C2.1 9.9 1.4 8.5 0.4 7.4 Z" fill="#000"/></svg>
<div class="t" style="left:112.50px;top:247.81px;font-size:7.0px;color:#1f2b78;">Test1x</div>
<svg class="b" style="left:157.90px;top:241.24px" width="6.3" height="7" viewBox="0 0 6.3 7"><ellipse cx="3.15" cy="2.2" rx="1.5" ry="2.2" fill="#5a5d58"/><path d="M0 7 V5.9 C0 5.0 1.2 4.8 2.3 4.3 H4 C5.1 4.8 6.3 5.0 6.3 5.9 V7Z" fill="#4f524d"/></svg>
<div class="t" style="left:164.50px;top:246.11px;font-size:7.0px;color:#1f2b78;">abb SuperAdmin</div>
<div class="t" style="left:442.30px;top:246.11px;font-size:7.0px;color:#383838;">1,00</div>
<div class="b" style="left:622.70px;top:240.64px;width:7.90px;height:7.90px;background:#eeeeee;border:1px solid #d9d9d9;box-sizing:border-box;border-radius:1.5px"></div>
<svg class="b" style="left:622.70px;top:240.64px" width="8" height="8" viewBox="0 0 8 8"><path d="M1.3 3.9 L3.2 5.9 L6.6 1.6" stroke="#8c8c8c" stroke-width="1.1" fill="none"/></svg>
<div class="b" style="left:689.80px;top:240.64px;width:7.90px;height:7.90px;background:#eeeeee;border:1px solid #d9d9d9;box-sizing:border-box;border-radius:1.5px"></div>
<div class="t" style="left:801.70px;top:246.11px;font-size:7.0px;color:#383838;">Quality success</div>
<div class="b" style="left:987.20px;top:240.44px;width:7.50px;height:7.40px;background:#fff;border:1px solid #cacaca;box-sizing:border-box;border-radius:1.5px"></div>
<div class="b" style="left:19.30px;top:260.40px;width:10.50px;height:11.20px;background:#fff"></div>
<svg class="b" style="left:18.90px;top:261.09px" width="11" height="10" viewBox="0 0 11 10"><circle cx="6.6" cy="4" r="3.4" stroke="#111" stroke-width="1.4" fill="#fff"/><path d="M4.2 6.4 L1 9.2" stroke="#111" stroke-width="2" stroke-linecap="round"/><circle cx="6.6" cy="2.9" r="0.9" fill="#111"/><path d="M5.9 3.4 H7.3 L6.6 5.6Z" fill="#111"/></svg>
<div class="t" style="left:32.00px;top:269.37px;font-size:7.0px;color:#1f2b78;">IN2005-0010</div>
<div class="b" style="left:99.80px;top:260.70px;width:10.20px;height:11.20px;background:#fff"></div>
<svg class="b" style="left:99.30px;top:260.79px" width="11" height="12" viewBox="0 0 11 12"><path d="M0.4 7.4 C1.4 6.3 2.9 6.5 3.6 8.0 C5.2 4.6 7.4 1.6 9.9 0.0 L10.4 0.6 C8.0 3.2 5.6 7.2 4.0 11.6 L2.6 11.6 C2.1 9.9 1.4 8.5 0.4 7.4 Z" fill="#000"/></svg>
<div class="t" style="left:112.50px;top:269.37px;font-size:7.0px;color:#1f2b78;">testx</div>
<svg class="b" style="left:157.90px;top:262.79px" width="6.3" height="7" viewBox="0 0 6.3 7"><ellipse cx="3.15" cy="2.2" rx="1.5" ry="2.2" fill="#5a5d58"/><path d="M0 7 V5.9 C0 5.0 1.2 4.8 2.3 4.3 H4 C5.1 4.8 6.3 5.0 6.3 5.9 V7Z" fill="#4f524d"/></svg>
<div class="t" style="left:164.50px;top:267.67px;font-size:7.0px;color:#1f2b78;">abb SuperAdmin</div>
<div class="t" style="left:442.30px;top:267.67px;font-size:7.0px;color:#383838;">1,00</div>
<div class="b" style="left:622.70px;top:262.19px;width:7.90px;height:7.90px;background:#eeeeee;border:1px solid #d9d9d9;box-sizing:border-box;border-radius:1.5px"></div>
<svg class="b" style="left:622.70px;top:262.19px" width="8" height="8" viewBox="0 0 8 8"><path d="M1.3 3.9 L3.2 5.9 L6.6 1.6" stroke="#8c8c8c" stroke-width="1.1" fill="none"/></svg>
<div class="b" style="left:689.80px;top:262.19px;width:7.90px;height:7.90px;background:#eeeeee;border:1px solid #d9d9d9;box-sizing:border-box;border-radius:1.5px"></div>
<div class="t" style="left:801.70px;top:267.67px;font-size:7.0px;color:#383838;">Quality success</div>
<div class="b" style="left:987.20px;top:261.99px;width:7.50px;height:7.40px;background:#fff;border:1px solid #cacaca;box-sizing:border-box;border-radius:1.5px"></div>
<svg class="b" style="left:18.90px;top:282.65px" width="11" height="10" viewBox="0 0 11 10"><circle cx="6.6" cy="4" r="3.4" stroke="#111" stroke-width="1.4" fill="#fff"/><path d="M4.2 6.4 L1 9.2" stroke="#111" stroke-width="2" stroke-linecap="round"/><circle cx="6.6" cy="2.9" r="0.9" fill="#111"/><path d="M5.9 3.4 H7.3 L6.6 5.6Z" fill="#111"/></svg>
<div class="t" style="left:32.00px;top:290.92px;font-size:7.0px;color:#1f2b78;">IN2005-0011</div>
<svg class="b" style="left:99.30px;top:282.35px" width="11" height="12" viewBox="0 0 11 12"><path d="M0.4 7.4 C1.4 6.3 2.9 6.5 3.6 8.0 C5.2 4.6 7.4 1.6 9.9 0.0 L10.4 0.6 C8.0 3.2 5.6 7.2 4.0 11.6 L2.6 11.6 C2.1 9.9 1.4 8.5 0.4 7.4 Z" fill="#000"/></svg>
<div class="t" style="left:112.50px;top:290.92px;font-size:7.0px;color:#1f2b78;">testCF</div>
<svg class="b" style="left:157.90px;top:284.35px" width="6.3" height="7" viewBox="0 0 6.3 7"><ellipse cx="3.15" cy="2.2" rx="1.5" ry="2.2" fill="#5a5d58"/><path d="M0 7 V5.9 C0 5.0 1.2 4.8 2.3 4.3 H4 C5.1 4.8 6.3 5.0 6.3 5.9 V7Z" fill="#4f524d"/></svg>
<div class="t" style="left:164.50px;top:289.22px;font-size:7.0px;color:#1f2b78;">abb SuperAdmin</div>
<div class="t" style="left:263.20px;top:289.22px;font-size:7.0px;color:#383838;">CommandeFournisseur</div>
<svg class="b" style="left:339.80px;top:285.10px" width="5" height="6" viewBox="0 0 5 6"><path d="M0.3 0.3 H2.8 L4.7 2.2 V6 H0.3Z" fill="#f2f2f2" stroke="#bdbdbd" stroke-width="0.5"/><path d="M2.8 0.3 V2.2 H4.7" fill="#999" stroke="#888" stroke-width="0.5"/><path d="M4.2 2.4 V5.8 H1.2" stroke="#8a8a8a" stroke-width="0.9" fill="none"/></svg>
<div class="t" style="left:348.00px;top:289.22px;font-size:7.0px;color:#1f2b78;">CF1611-0001</div>
<div class="t" style="left:442.30px;top:289.22px;font-size:7.0px;color:#383838;">1,00</div>
<div class="b" style="left:622.70px;top:283.75px;width:7.90px;height:7.90px;background:#eeeeee;border:1px solid #d9d9d9;box-sizing:border-box;border-radius:1.5px"></div>
<svg class="b" style="left:622.70px;top:283.75px" width="8" height="8" viewBox="0 0 8 8"><path d="M1.3 3.9 L3.2 5.9 L6.6 1.6" stroke="#8c8c8c" stroke-width="1.1" fill="none"/></svg>
<div class="b" style="left:689.80px;top:283.75px;width:7.90px;height:7.90px;background:#eeeeee;border:1px solid #d9d9d9;box-sizing:border-box;border-radius:1.5px"></div>
<svg class="b" style="left:689.80px;top:283.75px" width="8" height="8" viewBox="0 0 8 8"><path d="M1.3 3.9 L3.2 5.9 L6.6 1.6" stroke="#8c8c8c" stroke-width="1.1" fill="none"/></svg>
<div class="t" style="left:801.70px;top:289.22px;font-size:7.0px;color:#383838;">Quality success</div>
<div class="b" style="left:987.20px;top:283.55px;width:7.50px;height:7.40px;background:#fff;border:1px solid #cacaca;box-sizing:border-box;border-radius:1.5px"></div>
<svg class="b" style="left:18.90px;top:304.20px" width="11" height="10" viewBox="0 0 11 10"><circle cx="6.6" cy="4" r="3.4" stroke="#111" stroke-width="1.4" fill="#fff"/><path d="M4.2 6.4 L1 9.2" stroke="#111" stroke-width="2" stroke-linecap="round"/><circle cx="6.6" cy="2.9" r="0.9" fill="#111"/><path d="M5.9 3.4 H7.3 L6.6 5.6Z" fill="#111"/></svg>
<div class="t" style="left:32.00px;top:312.48px;font-size:7.0px;color:#1f2b78;">IN2005-0013</div>
<svg class="b" style="left:99.30px;top:303.90px" width="11" height="12" viewBox="0 0 11 12"><path d="M0.4 7.4 C1.4 6.3 2.9 6.5 3.6 8.0 C5.2 4.6 7.4 1.6 9.9 0.0 L10.4 0.6 C8.0 3.2 5.6 7.2 4.0 11.6 L2.6 11.6 C2.1 9.9 1.4 8.5 0.4 7.4 Z" fill="#000"/></svg>
<div class="t" style="left:112.50px;top:312.48px;font-size:7.0px;color:#1f2b78;">testx</div>
<svg class="b" style="left:157.90px;top:305.90px" width="6.3" height="7" viewBox="0 0 6.3 7"><ellipse cx="3.15" cy="2.2" rx="1.5" ry="2.2" fill="#5a5d58"/><path d="M0 7 V5.9 C0 5.0 1.2 4.8 2.3 4.3 H4 C5.1 4.8 6.3 5.0 6.3 5.9 V7Z" fill="#4f524d"/></svg>
<div class="t" style="left:164.50px;top:310.78px;font-size:7.0px;color:#1f2b78;">abb SuperAdmin</div>
<div class="t" style="left:263.20px;top:310.78px;font-size:7.0px;color:#383838;">Societe</div>
<svg class="b" style="left:288.80px;top:307.40px" width="6.8" height="6.4" viewBox="0 0 6.8 6.4"><rect x="0" y="2" width="3" height="4.4" fill="#a8acd6"/><rect x="3.4" y="0" width="3.4" height="6.4" fill="#9da2d2"/></svg>
<div class="t" style="left:442.30px;top:310.78px;font-size:7.0px;color:#383838;">1,00</div>
<div class="b" style="left:622.70px;top:305.30px;width:7.90px;height:7.90px;background:#eeeeee;border:1px solid #d9d9d9;box-sizing:border-box;border-radius:1.5px"></div>
<svg class="b" style="left:622.70px;top:305.30px" width="8" height="8" viewBox="0 0 8 8"><path d="M1.3 3.9 L3.2 5.9 L6.6 1.6" stroke="#8c8c8c" stroke-width="1.1" fill="none"/></svg>
<div class="b" style="left:689.80px;top:305.30px;width:7.90px;height:7.90px;background:#eeeeee;border:1px solid #d9d9d9;box-sizing:border-box;border-radius:1.5px"></div>
<div class="t" style="left:801.70px;top:310.78px;font-size:7.0px;color:#383838;">prêt</div>
<div class="b" style="left:987.20px;top:305.10px;width:7.50px;height:7.40px;background:#fff;border:1px solid #cacaca;box-sizing:border-box;border-radius:1.5px"></div>
<svg class="b" style="left:18.90px;top:325.76px" width="11" height="10" viewBox="0 0 11 10"><circle cx="6.6" cy="4" r="3.4" stroke="#111" stroke-width="1.4" fill="#fff"/><path d="M4.2 6.4 L1 9.2" stroke="#111" stroke-width="2" stroke-linecap="round"/><circle cx="6.6" cy="2.9" r="0.9" fill="#111"/><path d="M5.9 3.4 H7.3 L6.6 5.6Z" fill="#111"/></svg>
<div class="t" style="left:32.00px;top:334.03px;font-size:7.0px;color:#1f2b78;">IN2005-0012</div>
<svg class="b" style="left:99.30px;top:325.46px" width="11" height="12" viewBox="0 0 11 12"><path d="M0.4 7.4 C1.4 6.3 2.9 6.5 3.6 8.0 C5.2 4.6 7.4 1.6 9.9 0.0 L10.4 0.6 C8.0 3.2 5.6 7.2 4.0 11.6 L2.6 11.6 C2.1 9.9 1.4 8.5 0.4 7.4 Z" fill="#000"/></svg>
<div class="t" style="left:112.50px;top:334.03px;font-size:7.0px;color:#1f2b78;">testx</div>
<svg class="b" style="left:157.90px;top:327.46px" width="6.3" height="7" viewBox="0 0 6.3 7"><ellipse cx="3.15" cy="2.2" rx="1.5" ry="2.2" fill="#5a5d58"/><path d="M0 7 V5.9 C0 5.0 1.2 4.8 2.3 4.3 H4 C5.1 4.8 6.3 5.0 6.3 5.9 V7Z" fill="#4f524d"/></svg>
<div class="t" style="left:164.50px;top:332.33px;font-size:7.0px;color:#1f2b78;">abb SuperAdmin</div>
<div class="t" style="left:263.20px;top:332.33px;font-size:7.0px;color:#383838;">CommandeFournisseur</div>
<svg class="b" style="left:339.80px;top:328.21px" width="5" height="6" viewBox="0 0 5 6"><path d="M0.3 0.3 H2.8 L4.7 2.2 V6 H0.3Z" fill="#f2f2f2" stroke="#bdbdbd" stroke-width="0.5"/><path d="M2.8 0.3 V2.2 H4.7" fill="#999" stroke="#888" stroke-width="0.5"/><path d="M4.2 2.4 V5.8 H1.2" stroke="#8a8a8a" stroke-width="0.9" fill="none"/></svg>
<div class="t" style="left:348.00px;top:332.33px;font-size:7.0px;color:#1f2b78;">CF2003-0002</div>
<div class="t" style="left:442.30px;top:332.33px;font-size:7.0px;color:#383838;">1,00</div>
<div class="b" style="left:622.70px;top:326.86px;width:7.90px;height:7.90px;background:#eeeeee;border:1px solid #d9d9d9;box-sizing:border-box;border-radius:1.5px"></div>
<div class="b" style="left:689.80px;top:326.86px;width:7.90px;height:7.90px;background:#eeeeee;border:1px solid #d9d9d9;box-sizing:border-box;border-radius:1.5px"></div>
<div class="t" style="left:801.70px;top:332.33px;font-size:7.0px;color:#383838;">En attente d'approbation du superviseur</div>
<div class="b" style="left:987.20px;top:326.66px;width:7.50px;height:7.40px;background:#fff;border:1px solid #cacaca;box-sizing:border-box;border-radius:1.5px"></div>
<svg class="b" style="left:18.90px;top:347.32px" width="11" height="10" viewBox="0 0 11 10"><circle cx="6.6" cy="4" r="3.4" stroke="#111" stroke-width="1.4" fill="#fff"/><path d="M4.2 6.4 L1 9.2" stroke="#111" stroke-width="2" stroke-linecap="round"/><circle cx="6.6" cy="2.9" r="0.9" fill="#111"/><path d="M5.9 3.4 H7.3 L6.6 5.6Z" fill="#111"/></svg>
<div class="t" style="left:32.00px;top:355.59px;font-size:7.0px;color:#1f2b78;">(PROV125)</div>
<svg class="b" style="left:99.30px;top:347.02px" width="11" height="12" viewBox="0 0 11 12"><path d="M0.4 7.4 C1.4 6.3 2.9 6.5 3.6 8.0 C5.2 4.6 7.4 1.6 9.9 0.0 L10.4 0.6 C8.0 3.2 5.6 7.2 4.0 11.6 L2.6 11.6 C2.1 9.9 1.4 8.5 0.4 7.4 Z" fill="#000"/></svg>
<div class="t" style="left:112.50px;top:355.59px;font-size:7.0px;color:#1f2b78;">testCF</div>
<svg class="b" style="left:157.90px;top:349.02px" width="6.3" height="7" viewBox="0 0 6.3 7"><ellipse cx="3.15" cy="2.2" rx="1.5" ry="2.2" fill="#5a5d58"/><path d="M0 7 V5.9 C0 5.0 1.2 4.8 2.3 4.3 H4 C5.1 4.8 6.3 5.0 6.3 5.9 V7Z" fill="#4f524d"/></svg>
<div class="t" style="left:164.50px;top:353.89px;font-size:7.0px;color:#1f2b78;">abb SuperAdmin</div>
<div class="t" style="left:442.30px;top:353.89px;font-size:7.0px;color:#383838;">1,00</div>
<div class="b" style="left:622.70px;top:348.42px;width:7.90px;height:7.90px;background:#eeeeee;border:1px solid #d9d9d9;box-sizing:border-box;border-radius:1.5px"></div>
<div class="b" style="left:689.80px;top:348.42px;width:7.90px;height:7.90px;background:#eeeeee;border:1px solid #d9d9d9;box-sizing:border-box;border-radius:1.5px"></div>
<svg class="b" style="left:689.80px;top:348.42px" width="8" height="8" viewBox="0 0 8 8"><path d="M1.3 3.9 L3.2 5.9 L6.6 1.6" stroke="#8c8c8c" stroke-width="1.1" fill="none"/></svg>
<div class="t" style="left:801.70px;top:353.89px;font-size:7.0px;color:#383838;">brouillon</div>
<div class="b" style="left:987.20px;top:348.22px;width:7.50px;height:7.40px;background:#fff;border:1px solid #cacaca;box-sizing:border-box;border-radius:1.5px"></div>
<svg class="b" style="left:18.90px;top:368.87px" width="11" height="10" viewBox="0 0 11 10"><circle cx="6.6" cy="4" r="3.4" stroke="#111" stroke-width="1.4" fill="#fff"/><path d="M4.2 6.4 L1 9.2" stroke="#111" stroke-width="2" stroke-linecap="round"/><circle cx="6.6" cy="2.9" r="0.9" fill="#111"/><path d="M5.9 3.4 H7.3 L6.6 5.6Z" fill="#111"/></svg>
<div class="t" style="left:32.00px;top:377.15px;font-size:7.0px;color:#1f2b78;">IN2005-0014</div>
<svg class="b" style="left:99.30px;top:368.57px" width="11" height="12" viewBox="0 0 11 12"><path d="M0.4 7.4 C1.4 6.3 2.9 6.5 3.6 8.0 C5.2 4.6 7.4 1.6 9.9 0.0 L10.4 0.6 C8.0 3.2 5.6 7.2 4.0 11.6 L2.6 11.6 C2.1 9.9 1.4 8.5 0.4 7.4 Z" fill="#000"/></svg>
<div class="t" style="left:112.50px;top:377.15px;font-size:7.0px;color:#1f2b78;">test1</div>
<svg class="b" style="left:157.90px;top:370.57px" width="6.3" height="7" viewBox="0 0 6.3 7"><ellipse cx="3.15" cy="2.2" rx="1.5" ry="2.2" fill="#5a5d58"/><path d="M0 7 V5.9 C0 5.0 1.2 4.8 2.3 4.3 H4 C5.1 4.8 6.3 5.0 6.3 5.9 V7Z" fill="#4f524d"/></svg>
<div class="t" style="left:164.50px;top:375.45px;font-size:7.0px;color:#1f2b78;">abb SuperAdmin</div>
<div class="t" style="left:263.20px;top:375.45px;font-size:7.0px;color:#383838;">Facture</div>
<svg class="b" style="left:289.70px;top:371.87px" width="5.2" height="6.2" viewBox="0 0 5.2 6.2"><rect x="0" y="0" width="5.2" height="6.2" fill="#ddd" stroke="#888" stroke-width="0.6"/><path d="M1.2 1.6 H4 M1.2 3 H4 M1.2 4.4 H4" stroke="#777" stroke-width="0.5"/></svg>
<div class="t" style="left:297.90px;top:375.45px;font-size:7.0px;color:#1f2b78;">AC1803-0003</div>
<div class="t" style="left:442.30px;top:375.45px;font-size:7.0px;color:#383838;">1,00</div>
<svg class="b" style="left:510.90px;top:370.60px" width="5.8" height="6" viewBox="0 0 5.8 6"><circle cx="2.9" cy="3" r="2.9" fill="#c8b25a"/><circle cx="2.2" cy="2.2" r="1.2" fill="#e8d890"/></svg>
<div class="t" style="left:519.60px;top:375.45px;font-size:7.0px;color:#1f2b78;">accel1756514</div>
<div class="b" style="left:622.70px;top:369.97px;width:7.90px;height:7.90px;background:#eeeeee;border:1px solid #d9d9d9;box-sizing:border-box;border-radius:1.5px"></div>
<div class="b" style="left:689.80px;top:369.97px;width:7.90px;height:7.90px;background:#eeeeee;border:1px solid #d9d9d9;box-sizing:border-box;border-radius:1.5px"></div>
<div class="t" style="left:801.70px;top:375.45px;font-size:7.0px;color:#383838;">Quality_failed</div>
<div class="b" style="left:987.20px;top:369.77px;width:7.50px;height:7.40px;background:#fff;border:1px solid #cacaca;box-sizing:border-box;border-radius:1.5px"></div>
<svg class="b" style="left:18.90px;top:390.43px" width="11" height="10" viewBox="0 0 11 10"><circle cx="6.6" cy="4" r="3.4" stroke="#111" stroke-width="1.4" fill="#fff"/><path d="M4.2 6.4 L1 9.2" stroke="#111" stroke-width="2" stroke-linecap="round"/><circle cx="6.6" cy="2.9" r="0.9" fill="#111"/><path d="M5.9 3.4 H7.3 L6.6 5.6Z" fill="#111"/></svg>
<div class="t" style="left:32.00px;top:398.70px;font-size:7.0px;color:#1f2b78;">(PROV128)</div>
<svg class="b" style="left:99.30px;top:390.13px" width="11" height="12" viewBox="0 0 11 12"><path d="M0.4 7.4 C1.4 6.3 2.9 6.5 3.6 8.0 C5.2 4.6 7.4 1.6 9.9 0.0 L10.4 0.6 C8.0 3.2 5.6 7.2 4.0 11.6 L2.6 11.6 C2.1 9.9 1.4 8.5 0.4 7.4 Z" fill="#000"/></svg>
<div class="t" style="left:112.50px;top:398.70px;font-size:7.0px;color:#1f2b78;">testCF</div>
<svg class="b" style="left:157.90px;top:392.13px" width="6.3" height="7" viewBox="0 0 6.3 7"><ellipse cx="3.15" cy="2.2" rx="1.5" ry="2.2" fill="#5a5d58"/><path d="M0 7 V5.9 C0 5.0 1.2 4.8 2.3 4.3 H4 C5.1 4.8 6.3 5.0 6.3 5.9 V7Z" fill="#4f524d"/></svg>
<div class="t" style="left:164.50px;top:397.00px;font-size:7.0px;color:#1f2b78;">abb SuperAdmin</div>
<div class="t" style="left:442.30px;top:397.00px;font-size:7.0px;color:#383838;">1,00</div>
<div class="b" style="left:622.70px;top:391.53px;width:7.90px;height:7.90px;background:#eeeeee;border:1px solid #d9d9d9;box-sizing:border-box;border-radius:1.5px"></div>
<div class="b" style="left:689.80px;top:391.53px;width:7.90px;height:7.90px;background:#eeeeee;border:1px solid #d9d9d9;box-sizing:border-box;border-radius:1.5px"></div>
<svg class="b" style="left:689.80px;top:391.53px" width="8" height="8" viewBox="0 0 8 8"><path d="M1.3 3.9 L3.2 5.9 L6.6 1.6" stroke="#8c8c8c" stroke-width="1.1" fill="none"/></svg>
<div class="t" style="left:801.70px;top:397.00px;font-size:7.0px;color:#383838;">brouillon</div>
<div class="b" style="left:987.20px;top:391.33px;width:7.50px;height:7.40px;background:#fff;border:1px solid #cacaca;box-sizing:border-box;border-radius:1.5px"></div>
<svg class="b" style="left:18.90px;top:411.98px" width="11" height="10" viewBox="0 0 11 10"><circle cx="6.6" cy="4" r="3.4" stroke="#111" stroke-width="1.4" fill="#fff"/><path d="M4.2 6.4 L1 9.2" stroke="#111" stroke-width="2" stroke-linecap="round"/><circle cx="6.6" cy="2.9" r="0.9" fill="#111"/><path d="M5.9 3.4 H7.3 L6.6 5.6Z" fill="#111"/></svg>
<div class="t" style="left:32.00px;top:420.26px;font-size:7.0px;color:#1f2b78;">(PROV129)</div>
<svg class="b" style="left:99.30px;top:411.68px" width="11" height="12" viewBox="0 0 11 12"><path d="M0.4 7.4 C1.4 6.3 2.9 6.5 3.6 8.0 C5.2 4.6 7.4 1.6 9.9 0.0 L10.4 0.6 C8.0 3.2 5.6 7.2 4.0 11.6 L2.6 11.6 C2.1 9.9 1.4 8.5 0.4 7.4 Z" fill="#000"/></svg>
<div class="t" style="left:112.50px;top:420.26px;font-size:7.0px;color:#1f2b78;">testCF</div>
<svg class="b" style="left:157.90px;top:413.68px" width="6.3" height="7" viewBox="0 0 6.3 7"><ellipse cx="3.15" cy="2.2" rx="1.5" ry="2.2" fill="#5a5d58"/><path d="M0 7 V5.9 C0 5.0 1.2 4.8 2.3 4.3 H4 C5.1 4.8 6.3 5.0 6.3 5.9 V7Z" fill="#4f524d"/></svg>
<div class="t" style="left:164.50px;top:418.56px;font-size:7.0px;color:#1f2b78;">abb SuperAdmin</div>
<div class="t" style="left:442.30px;top:418.56px;font-size:7.0px;color:#383838;">1,00</div>
<div class="b" style="left:622.70px;top:413.08px;width:7.90px;height:7.90px;background:#eeeeee;border:1px solid #d9d9d9;box-sizing:border-box;border-radius:1.5px"></div>
<div class="b" style="left:689.80px;top:413.08px;width:7.90px;height:7.90px;background:#eeeeee;border:1px solid #d9d9d9;box-sizing:border-box;border-radius:1.5px"></div>
<svg class="b" style="left:689.80px;top:413.08px" width="8" height="8" viewBox="0 0 8 8"><path d="M1.3 3.9 L3.2 5.9 L6.6 1.6" stroke="#8c8c8c" stroke-width="1.1" fill="none"/></svg>
<div class="t" style="left:801.70px;top:418.56px;font-size:7.0px;color:#383838;">brouillon</div>
<div class="b" style="left:987.20px;top:412.88px;width:7.50px;height:7.40px;background:#fff;border:1px solid #cacaca;box-sizing:border-box;border-radius:1.5px"></div>
<svg class="b" style="left:18.90px;top:433.54px" width="11" height="10" viewBox="0 0 11 10"><circle cx="6.6" cy="4" r="3.4" stroke="#111" stroke-width="1.4" fill="#fff"/><path d="M4.2 6.4 L1 9.2" stroke="#111" stroke-width="2" stroke-linecap="round"/><circle cx="6.6" cy="2.9" r="0.9" fill="#111"/><path d="M5.9 3.4 H7.3 L6.6 5.6Z" fill="#111"/></svg>
<div class="t" style="left:32.00px;top:441.81px;font-size:7.0px;color:#1f2b78;">(PROV131)</div>
<svg class="b" style="left:99.30px;top:433.24px" width="11" height="12" viewBox="0 0 11 12"><path d="M0.4 7.4 C1.4 6.3 2.9 6.5 3.6 8.0 C5.2 4.6 7.4 1.6 9.9 0.0 L10.4 0.6 C8.0 3.2 5.6 7.2 4.0 11.6 L2.6 11.6 C2.1 9.9 1.4 8.5 0.4 7.4 Z" fill="#000"/></svg>
<div class="t" style="left:112.50px;top:441.81px;font-size:7.0px;color:#1f2b78;">testCF</div>
<svg class="b" style="left:157.90px;top:435.24px" width="6.3" height="7" viewBox="0 0 6.3 7"><ellipse cx="3.15" cy="2.2" rx="1.5" ry="2.2" fill="#5a5d58"/><path d="M0 7 V5.9 C0 5.0 1.2 4.8 2.3 4.3 H4 C5.1 4.8 6.3 5.0 6.3 5.9 V7Z" fill="#4f524d"/></svg>
<div class="t" style="left:164.50px;top:440.11px;font-size:7.0px;color:#1f2b78;">abb SuperAdmin</div>
<div class="t" style="left:442.30px;top:440.11px;font-size:7.0px;color:#383838;">1,00</div>
<div class="b" style="left:622.70px;top:434.64px;width:7.90px;height:7.90px;background:#eeeeee;border:1px solid #d9d9d9;box-sizing:border-box;border-radius:1.5px"></div>
<div class="b" style="left:689.80px;top:434.64px;width:7.90px;height:7.90px;background:#eeeeee;border:1px solid #d9d9d9;box-sizing:border-box;border-radius:1.5px"></div>
<svg class="b" style="left:689.80px;top:434.64px" width="8" height="8" viewBox="0 0 8 8"><path d="M1.3 3.9 L3.2 5.9 L6.6 1.6" stroke="#8c8c8c" stroke-width="1.1" fill="none"/></svg>
<div class="t" style="left:801.70px;top:440.11px;font-size:7.0px;color:#383838;">brouillon</div>
<div class="b" style="left:987.20px;top:434.44px;width:7.50px;height:7.40px;background:#fff;border:1px solid #cacaca;box-sizing:border-box;border-radius:1.5px"></div>
<svg class="b" style="left:18.90px;top:455.10px" width="11" height="10" viewBox="0 0 11 10"><circle cx="6.6" cy="4" r="3.4" stroke="#111" stroke-width="1.4" fill="#fff"/><path d="M4.2 6.4 L1 9.2" stroke="#111" stroke-width="2" stroke-linecap="round"/><circle cx="6.6" cy="2.9" r="0.9" fill="#111"/><path d="M5.9 3.4 H7.3 L6.6 5.6Z" fill="#111"/></svg>
<div class="t" style="left:32.00px;top:463.37px;font-size:7.0px;color:#1f2b78;">(PROV134)</div>
<svg class="b" style="left:99.30px;top:454.80px" width="11" height="12" viewBox="0 0 11 12"><path d="M0.4 7.4 C1.4 6.3 2.9 6.5 3.6 8.0 C5.2 4.6 7.4 1.6 9.9 0.0 L10.4 0.6 C8.0 3.2 5.6 7.2 4.0 11.6 L2.6 11.6 C2.1 9.9 1.4 8.5 0.4 7.4 Z" fill="#000"/></svg>
<div class="t" style="left:112.50px;top:463.37px;font-size:7.0px;color:#1f2b78;">testCF</div>
<svg class="b" style="left:157.90px;top:456.80px" width="6.3" height="7" viewBox="0 0 6.3 7"><ellipse cx="3.15" cy="2.2" rx="1.5" ry="2.2" fill="#5a5d58"/><path d="M0 7 V5.9 C0 5.0 1.2 4.8 2.3 4.3 H4 C5.1 4.8 6.3 5.0 6.3 5.9 V7Z" fill="#4f524d"/></svg>
<div class="t" style="left:164.50px;top:461.67px;font-size:7.0px;color:#1f2b78;">abb SuperAdmin</div>
<div class="t" style="left:442.30px;top:461.67px;font-size:7.0px;color:#383838;">1,00</div>
<div class="b" style="left:622.70px;top:456.20px;width:7.90px;height:7.90px;background:#eeeeee;border:1px solid #d9d9d9;box-sizing:border-box;border-radius:1.5px"></div>
<div class="b" style="left:689.80px;top:456.20px;width:7.90px;height:7.90px;background:#eeeeee;border:1px solid #d9d9d9;box-sizing:border-box;border-radius:1.5px"></div>
<svg class="b" style="left:689.80px;top:456.20px" width="8" height="8" viewBox="0 0 8 8"><path d="M1.3 3.9 L3.2 5.9 L6.6 1.6" stroke="#8c8c8c" stroke-width="1.1" fill="none"/></svg>
<div class="t" style="left:801.70px;top:461.67px;font-size:7.0px;color:#383838;">brouillon</div>
<div class="b" style="left:987.20px;top:456.00px;width:7.50px;height:7.40px;background:#fff;border:1px solid #cacaca;box-sizing:border-box;border-radius:1.5px"></div>
</body></html>
